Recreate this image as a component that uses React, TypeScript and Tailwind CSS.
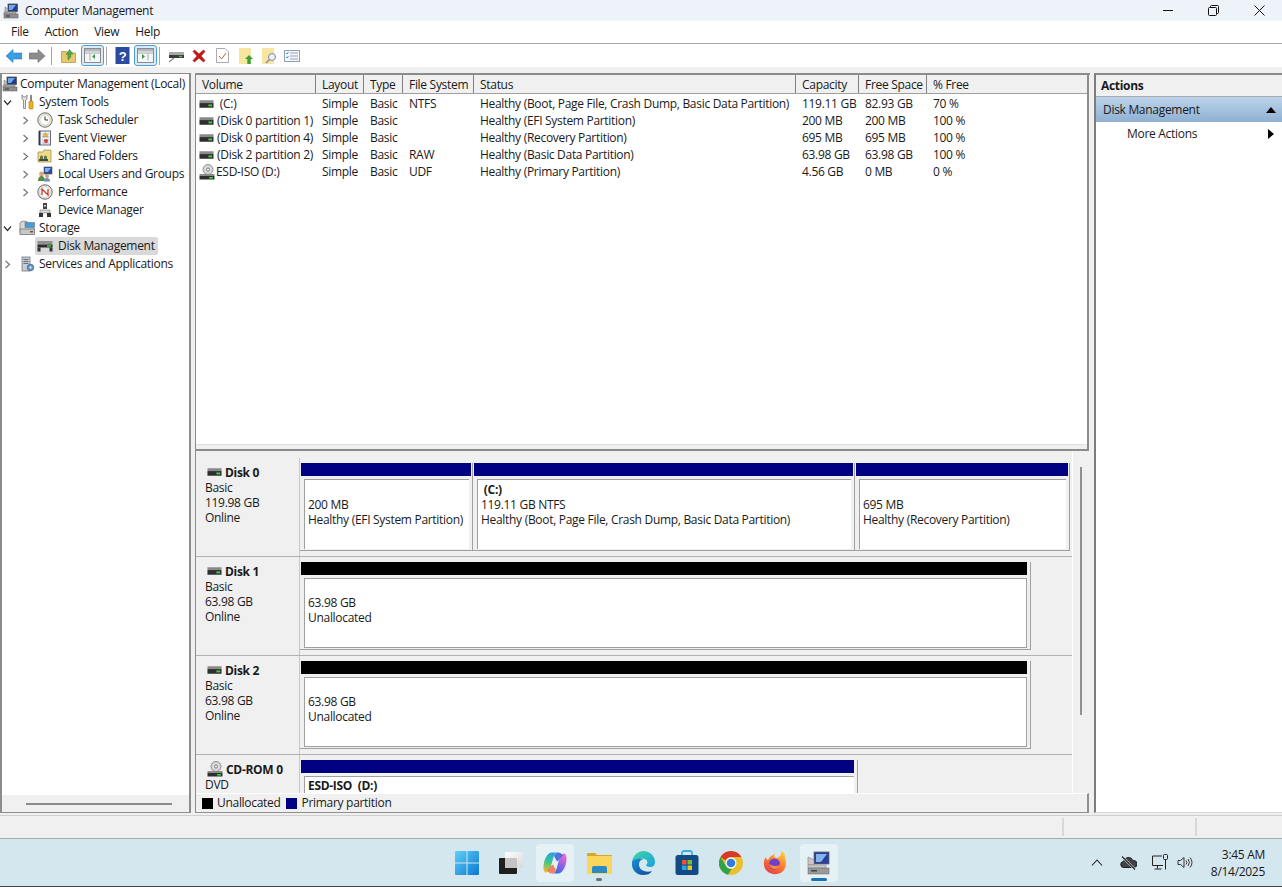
import React from "react";

const F = "[font-family:'Open_Sans','Noto_Sans',sans-serif]";

function DiskIcon({ className = "" }: { className?: string }) {
  return (
    <svg width="15" height="10" viewBox="0 0 16 10" className={`shrink-0 ${className}`}>
      <rect x="0.5" y="1" width="15" height="3" fill="#8a8a8a" />
      <rect x="0.5" y="4" width="15" height="5" fill="#2e2e2e" />
      <rect x="10" y="5.500" width="4" height="2" fill="#3fd03f" />
    </svg>
  );
}

function CdIcon() {
  return (
    <svg width="16" height="16" viewBox="0 0 16 16" className="shrink-0">
      <circle cx="9" cy="5.5" r="5" fill="#d8d8d8" stroke="#8c8c8c" />
      <circle cx="9" cy="5.5" r="1.5" fill="#fff" stroke="#777" />
      <rect x="0.5" y="10" width="15" height="2" fill="#8a8a8a" />
      <rect x="0.5" y="12" width="15" height="3.5" fill="#2e2e2e" />
      <rect x="10" y="13" width="4" height="1.5" fill="#3fd03f" />
    </svg>
  );
}

function CompMgmtIcon({ size = 16 }: { size?: number }) {
  return (
    <svg width={size} height={size} viewBox="0 0 16 16" className="shrink-0">
      <rect x="5" y="1" width="9.5" height="7.5" fill="#203a90" stroke="#555" strokeWidth="0.8" />
      <path d="M6 2h7l-4 5H6z" fill="#6fa8e8" />
      <rect x="1" y="9" width="12" height="2" fill="#b8b8b8" stroke="#777" strokeWidth="0.5" />
      <rect x="1" y="11" width="14" height="4" fill="#8f8f8f" stroke="#555" strokeWidth="0.5" />
      <rect x="3" y="12.5" width="4" height="1" fill="#333" />
      <path d="M2 4l3 2v3H2z" fill="#c0c0c0" stroke="#666" strokeWidth="0.5" />
    </svg>
  );
}

function Chevron({ open }: { open?: boolean }) {
  return (
    <svg width="9" height="9" viewBox="0 0 9 9" fill="none" strokeWidth="1.2">
      {open ? <path d="M1 2.5l3.5 4 3.5-4" stroke="#333" /> : <path d="M2.5 1l4 3.5-4 3.5" stroke="#777" />}
    </svg>
  );
}

function TreeIcon({ kind }: { kind: string }) {
  const common = { width: 16, height: 16, viewBox: "0 0 16 16" };
  switch (kind) {
    case "tools":
      return (
        <svg {...common}>
          <path d="M3 1v4l1.5 1v8.5h2V6L8 5V1L6.5 3h-2z" fill="#e8e8e8" stroke="#777" strokeWidth="0.8" />
          <path d="M11 1h2v6h-2z" fill="#888" />
          <rect x="10" y="7" width="4" height="8" rx="1" fill="#eeb020" stroke="#a87810" strokeWidth="0.6" />
        </svg>
      );
    case "clock":
      return (
        <svg {...common}>
          <circle cx="8" cy="8" r="7.2" fill="#e9e6d6" stroke="#707070" />
          <circle cx="8" cy="8" r="5" fill="#fff" stroke="#b8b8b8" strokeWidth="0.5" />
          <path d="M8 4.5V8h3" stroke="#333" fill="none" />
        </svg>
      );
    case "event":
      return (
        <svg {...common}>
          <rect x="2.5" y="1" width="11" height="14" fill="#f0f2f8" stroke="#556" strokeWidth="0.9" />
          <path d="M2.5 1v14" stroke="#335" strokeWidth="2" />
          <path d="M5 4h7M5 7h7M5 10h7M5 13h7" stroke="#99a" strokeWidth="0.7" />
          <path d="M8.5 2.5l2.5 4h-5z" fill="#f0c020" stroke="#a07a10" strokeWidth="0.4" />
          <circle cx="9" cy="11" r="2" fill="#d04030" />
        </svg>
      );
    case "shared":
      return (
        <svg {...common}>
          <path d="M1 4h5l1-2h7v12H1z" fill="#eed98a" stroke="#a89350" strokeWidth="0.8" />
          <path d="M3 9a1.5 1.5 0 113 0v2H3zM7 9a1.5 1.5 0 113 0v2H7z" fill="#5a7a40" />
          <rect x="2" y="11" width="9" height="2" fill="#445" />
        </svg>
      );
    case "users":
      return (
        <svg {...common}>
          <rect x="7" y="1" width="8" height="7" fill="#2a4a9a" stroke="#555" strokeWidth="0.6" />
          <path d="M8 2h6l-3 4H8z" fill="#80b0e8" />
          <circle cx="4.5" cy="8" r="2.4" fill="#d9a878" />
          <path d="M1 15c0-3.5 1.5-5 3.5-5S8 11.500 8 15z" fill="#5a8a40" />
          <circle cx="10" cy="10" r="2" fill="#c8a080" />
          <path d="M7 15.500c0-2.500 1.400-3.500 3-3.500s3 1 3 3.500z" fill="#6a8fc0" />
        </svg>
      );
    case "perf":
      return (
        <svg {...common}>
          <circle cx="8" cy="8" r="7.200" fill="#f2efe6" stroke="#666" />
          <circle cx="8" cy="8" r="5.300" fill="#fff" stroke="#aaa" strokeWidth="0.5" />
          <path d="M5 11V5l6 6V5" fill="none" stroke="#c03828" strokeWidth="1.300" />
        </svg>
      );
    case "device":
      return (
        <svg {...common}>
          <rect x="6" y="1" width="4" height="6" fill="#444" />
          <rect x="7" y="3" width="2" height="1.500" fill="#ddd" />
          <path d="M3 8h10v3H3z" fill="#d8d8d8" stroke="#777" strokeWidth="0.6" />
          <rect x="2" y="11" width="4" height="4" fill="#333" />
          <rect x="10" y="11" width="4" height="4" fill="#333" />
        </svg>
      );
    case "storage":
      return (
        <svg {...common}>
          <ellipse cx="5" cy="3.500" rx="4" ry="2.500" fill="#cfd8d8" stroke="#777" strokeWidth="0.7" />
          <path d="M1 3.500v9h14v-6H9v-3" fill="#d8d8d8" stroke="#777" strokeWidth="0.7" />
          <rect x="6" y="2.500" width="9.500" height="5" fill="#3fa0d8" stroke="#667" strokeWidth="0.5" />
          <rect x="1" y="9" width="14.500" height="5.500" fill="#c8c8c8" stroke="#666" strokeWidth="0.7" />
          <rect x="11" y="11" width="3" height="1.500" fill="#555" />
        </svg>
      );
    case "disk":
      return (
        <svg {...common}>
          <rect x="0.500" y="3" width="15" height="3.500" fill="#909090" />
          <rect x="0.500" y="6.500" width="15" height="3" fill="#2c2c2c" />
          <rect x="0.500" y="9.500" width="3" height="4" fill="#333" />
          <rect x="12.500" y="9.500" width="3" height="4" fill="#333" />
          <rect x="10" y="7.200" width="4" height="1.500" fill="#3fd03f" />
        </svg>
      );
    default:
      return (
        <svg {...common}>
          <rect x="3" y="1" width="8" height="14" fill="#c4ccd4" stroke="#667" strokeWidth="0.7" />
          <path d="M4.500 3.500h5M4.500 5.500h5M4.500 7.500h5" stroke="#445" strokeWidth="0.7" />
          <circle cx="11.500" cy="11.500" r="3.200" fill="#6a9ac8" stroke="#38608a" strokeWidth="0.8" />
          <circle cx="11.500" cy="11.500" r="1" fill="#fff" />
        </svg>
      );
  }
}

const tree = [
  { indent: 0, chevron: null, icon: "root", label: "Computer Management (Local)" },
  { indent: 0, chevron: "open", icon: "tools", label: "System Tools" },
  { indent: 18, chevron: "closed", icon: "clock", label: "Task Scheduler" },
  { indent: 18, chevron: "closed", icon: "event", label: "Event Viewer" },
  { indent: 18, chevron: "closed", icon: "shared", label: "Shared Folders" },
  { indent: 18, chevron: "closed", icon: "users", label: "Local Users and Groups" },
  { indent: 18, chevron: "closed", icon: "perf", label: "Performance" },
  { indent: 18, chevron: "none", icon: "device", label: "Device Manager" },
  { indent: 0, chevron: "open", icon: "storage", label: "Storage" },
  { indent: 18, chevron: "none", icon: "disk", label: "Disk Management", selected: true },
  { indent: 0, chevron: "closed", icon: "services", label: "Services and Applications" },
];

const cols = ["Volume", "Layout", "Type", "File System", "Status", "Capacity", "Free Space", "% Free"];
const rows = [
  ["\u00a0(C:)", "Simple", "Basic", "NTFS", "Healthy (Boot, Page File, Crash Dump, Basic Data Partition)", "119.11 GB", "82.93 GB", "70 %"],
  ["(Disk 0 partition 1)", "Simple", "Basic", "", "Healthy (EFI System Partition)", "200 MB", "200 MB", "100 %"],
  ["(Disk 0 partition 4)", "Simple", "Basic", "", "Healthy (Recovery Partition)", "695 MB", "695 MB", "100 %"],
  ["(Disk 2 partition 2)", "Simple", "Basic", "RAW", "Healthy (Basic Data Partition)", "63.98 GB", "63.98 GB", "100 %"],
  ["ESD-ISO (D:)", "Simple", "Basic", "UDF", "Healthy (Primary Partition)", "4.56 GB", "0 MB", "0 %"],
];
const gridCols = "grid-cols-[120px_48px_39px_71px_322px_63px_68px_161px]";

function ToolBtnPane({ play }: { play?: boolean }) {
  return (
    <div className="w-[23px] h-[21px] rounded-[3px] border border-[#4a9fd8] bg-[#dcebf8] flex items-center justify-center">
      <svg width="17" height="15" viewBox="0 0 17 15">
        <rect x="0.500" y="0.500" width="16" height="14" fill="#f4f6f8" stroke="#8a8a8a" />
        <rect x="1" y="1" width="15" height="2.500" fill="#b0b8c0" />
        {play ? (
          <>
            <path d="M5 6l3 2.500-3 2.500z" fill="#3a9a3a" />
            <path d="M11 5.500v7M1 5h15" stroke="#999" strokeWidth="0.8" />
          </>
        ) : (
          <>
            <path d="M11 6l-3 2.500 3 2.500z" fill="#3a9a3a" />
            <path d="M6 5.500v7M1 5h15" stroke="#999" strokeWidth="0.8" />
          </>
        )}
      </svg>
    </div>
  );
}

function Sep() {
  return <div className="w-px h-[18px] bg-[#a8a8a8]" />;
}

function Toolbar() {
  return (
    <div className="h-[23px] bg-white flex items-center pl-[6px]">
      <svg width="16" height="14" viewBox="0 0 16 14"><path d="M0 7l7-6.500V4h9v6H7v3.500z" fill="#3a9ee4" stroke="#2878b8" strokeWidth="0.6" /></svg>
      <svg width="16" height="14" viewBox="0 0 16 14" className="ml-[7px]"><path d="M16 7L9 .5V4H0v6h9v3.500z" fill="#8c8c8c" stroke="#6c6c6c" strokeWidth="0.6" /></svg>
      <div className="ml-[6px]"><Sep /></div>
      <svg width="15" height="15" viewBox="0 0 15 15" className="ml-[9px]">
        <path d="M0.500 3.500h5l1 1.500h8v9.500H.500z" fill="#e8c868" stroke="#a89040" strokeWidth="0.7" />
        <path d="M7 12V6L5 6.500 8.500 1.500 12 6l-2.300-.2V9z" fill="#4ca84c" stroke="#2e7a2e" strokeWidth="0.5" />
      </svg>
      <div className="ml-[5px]"><ToolBtnPane /></div>
      <div className="ml-[2px]"><Sep /></div>
      <svg width="15" height="17" viewBox="0 0 15 17" className="ml-[8px]">
        <rect width="14" height="17" x="0.500" fill="#2c4aa0" />
        <text x="7.500" y="14" fontSize="13" fontWeight="700" fill="#fff" textAnchor="middle" fontFamily="Liberation Sans">?</text>
      </svg>
      <div className="ml-[4px]"><ToolBtnPane play /></div>
      <div className="ml-[2px]"><Sep /></div>
      <svg width="16" height="14" viewBox="0 0 16 14" className="ml-[8px]">
        <rect x="1" y="3" width="15" height="3" fill="#a8a8a8" />
        <rect x="1" y="6" width="15" height="3" fill="#3c3c3c" />
        <rect x="11" y="6.800" width="3" height="1.400" fill="#3fd03f" />
        <path d="M6 9l-5 4" stroke="#8c8c8c" strokeWidth="1.500" />
      </svg>
      <svg width="14" height="14" viewBox="0 0 14 14" className="ml-[8px]"><path d="M1 2.500L2.500 1 7 5 11.500 1 13 2.500 9 7l4 4.500-1.500 1.500L7 9l-4.500 4L1 11.500 5 7z" fill="#c81818" stroke="#a01010" strokeWidth="0.6" /></svg>
      <svg width="13" height="15" viewBox="0 0 13 15" className="ml-[10px]">
        <path d="M.5.500h8.500l3.500 3.500v10.500H.500z" fill="#fff" stroke="#aaa" />
        <path d="M3 8l2.500 3L10 5" fill="none" stroke="#d0603a" strokeWidth="1" />
      </svg>
      <svg width="14" height="16" viewBox="0 0 14 16" className="ml-[10px]">
        <rect x="0" y="0" width="12" height="16" fill="#f7e6a0" />
        <path d="M10 7l4 4h-2.300v5H8.300v-5H6z" fill="#38a038" />
      </svg>
      <svg width="15" height="16" viewBox="0 0 15 16" className="ml-[9px]">
        <rect x="0" y="0" width="12" height="16" fill="#f7e6a0" />
        <circle cx="10" cy="9" r="3.500" fill="#e8f0f8" stroke="#889" />
        <path d="M7.500 11.500L4 15" stroke="#889" strokeWidth="1.500" />
      </svg>
      <svg width="16" height="12" viewBox="0 0 16 12" className="ml-[7px]">
        <rect x="0.500" y="0.500" width="15" height="11" fill="#f4f8fc" stroke="#8fa0b0" />
        <path d="M6 3h8M6 6h8M6 9h8" stroke="#88a" strokeWidth="0.8" />
        <path d="M2 3l1 1 1.500-2M2 7l1 1 1.500-2" stroke="#4070b0" fill="none" strokeWidth="0.8" />
      </svg>
    </div>
  );
}

function TreePane() {
  return (
    <div className="w-[191px] border border-[#8c8c8c] border-l-2 border-r-2 bg-white flex flex-col">
      <div className="flex-1 pt-px">
        {tree.map((t) => (
          <div key={t.label} className="h-[18px] flex items-center" style={{ paddingLeft: t.indent }}>
            {t.chevron === null ? null : (
              <div className="w-[10px] flex justify-center">
                {t.chevron === "none" ? null : <Chevron open={t.chevron === "open"} />}
              </div>
            )}
            <div className={`flex items-center h-[18px] pr-[3px] pl-[2px] ${t.chevron === null ? "" : "ml-[5px]"} ${t.selected ? "bg-[#d9d9d9] rounded-[2px]" : ""}`}>
              <div className={`w-[16px] h-[16px] flex items-center justify-center ${t.chevron === null ? "-ml-[2px] mr-[2px]" : t.indent === 0 ? "mr-[4px]" : "mr-[5px]"}`}>
                {t.icon === "root" ? <CompMgmtIcon /> : <TreeIcon kind={t.icon} />}
              </div>
              <span className="whitespace-nowrap">{t.label}</span>
            </div>
          </div>
        ))}
      </div>
      <div className="h-[17px] bg-[#f0f0f0] flex items-center pl-[24px]">
        <div className="w-[146px] h-[2px] bg-[#8c8c8c]" />
      </div>
    </div>
  );
}

function VolumeTable() {
  return (
    <div className="h-[376px] shrink-0 mr-px bg-white border-b-[2px] border-[#8c8c8c] border-r-2 overflow-hidden flex flex-col">
      <div className={`grid ${gridCols} h-[19px] shrink-0 bg-[#f0f0f0] border-b border-[#a0a0a0]`}>
        {cols.map((c) => (
          <div key={c} className="border-r border-[#808080] px-[6px] flex items-center leading-none whitespace-nowrap pt-px">{c}</div>
        ))}
      </div>
      <div className="flex-1 pt-px">
        {rows.map((r, i) => (
          <div key={r[0]} className={`grid ${gridCols} h-[17px] items-center`}>
            {r.map((v, j) => (
              <div key={j} className={`whitespace-nowrap ${j === 0 ? `pl-[3px] flex items-center ${i === 4 ? "gap-px" : "gap-[3px]"}` : "pl-[6px]"}`}>
                {j === 0 ? (i === 4 ? <CdIcon /> : <DiskIcon />) : null}
                {v}
              </div>
            ))}
          </div>
        ))}
      </div>
      <div className="h-[5px] shrink-0 bg-[#f0f0f0] border-t border-[#e0e0e0]" />
    </div>
  );
}

function Partition({ w, bar, title, l1, l2, short }: { w: number; bar: string; title?: string; l1?: string; l2?: string; short?: boolean }) {
  return (
    <div className="shrink-0 h-[88px] bg-[#f0f0f0] border-r border-b border-[#a0a0a0] pl-px flex flex-col" style={{ width: w }}>
      <div className={`h-[13px] shrink-0 ${short ? "mr-[3px]" : "mr-px"}`} style={{ background: bar }} />
      <div className={`mt-[3px] ml-[3px] h-[70px] border-l border-t border-[#a0a0a0] bg-white pl-[3px] leading-[15px] flex flex-col justify-end pb-[22px] whitespace-nowrap ${short ? "mr-[3px] border-r border-b" : "mr-[3px]"}`}>
        {title ? <div className="font-bold">{title}</div> : null}
        {l1 ? <div>{l1}</div> : null}
        {l2 ? <div>{l2}</div> : null}
      </div>
    </div>
  );
}

function DiskRow({ name, lines, cd, children }: { name: string; lines: string[]; cd?: boolean; children: React.ReactNode }) {
  return (
    <div className="h-[99px] shrink-0 flex border-b border-[#b0b0b0]">
      <div className="w-[104px] shrink-0 border-r border-[#c8c8c8] pl-[9px] pt-[6px] leading-[15px]">
        <div className="flex items-center h-[16px] gap-[3px] pl-[2px] font-bold whitespace-nowrap">
          {cd ? <CdIcon /> : <DiskIcon />}
          {name}
        </div>
        {lines.map((l) => <div key={l}>{l}</div>)}
      </div>
      <div className="pt-[5px] flex items-start">{children}</div>
    </div>
  );
}

function DiskPane() {
  return (
    <div className="relative flex-1 min-h-0 flex flex-col bg-[#f0f0f0]">
      <div className="h-[342px] w-[877px] pt-[7px] overflow-hidden flex flex-col border-r border-white">
        <DiskRow name="Disk 0" lines={["Basic", "119.98 GB", "Online"]}>
          <Partition w={173} bar="#000080" l1="200 MB" l2="Healthy (EFI System Partition)" />
          <Partition w={382} bar="#000080" title={"\u00a0(C:)"} l1="119.11 GB NTFS" l2="Healthy (Boot, Page File, Crash Dump, Basic Data Partition)" />
          <Partition w={215} bar="#000080" l1="695 MB" l2="Healthy (Recovery Partition)" />
        </DiskRow>
        <DiskRow name="Disk 1" lines={["Basic", "63.98 GB", "Online"]}>
          <Partition w={731} bar="#000" l1="63.98 GB" l2="Unallocated" short />
        </DiskRow>
        <DiskRow name="Disk 2" lines={["Basic", "63.98 GB", "Online"]}>
          <Partition w={731} bar="#000" l1="63.98 GB" l2="Unallocated" short />
        </DiskRow>
        <DiskRow name="CD-ROM 0" cd lines={["DVD"]}>
          <div className="w-[558px] h-[88px] shrink-0 border-r border-[#a0a0a0] pl-px">
            <div className="h-[13px] mr-[3px] bg-[#000080]" />
            <div className="mt-[3px] ml-[3px] mr-[3px] h-[70px] border-l border-t border-[#a0a0a0] bg-white pl-[3px] pt-[2px] font-bold leading-[14px]">ESD-ISO&nbsp;&nbsp;(D:)</div>
          </div>
        </DiskRow>
      </div>
      <div className="h-[20px] mr-px flex items-center border-t border-t-white border-b border-r-2 border-r-[#909090] border-b-[#909090] pl-[6px] leading-none">
        <div className="w-[11px] h-[11px] bg-black mr-[4px]" />
        <span>Unallocated</span>
        <div className="w-[11px] h-[11px] bg-[#000080] ml-[5px] mr-[5px]" />
        <span>Primary partition</span>
      </div>
      <div className="absolute left-[884px] top-[16px] w-[2px] h-[248px] bg-[#909090]" />
    </div>
  );
}

function ActionsPane() {
  return (
    <div className="flex-1 border-l-2 border-t-2 border-b border-b-[#d8d8d8] border-l-[#7c7c7c] border-t-[#8c8c8c] bg-white flex flex-col">
      <div className="h-[22px] bg-[#f0f0f0] border-b border-[#a8a8a8] pl-[5px] flex items-center font-bold">Actions</div>
      <div className="h-[25px] bg-gradient-to-b from-[#bcd4ea] to-[#8fb0d2] pl-[7px] pr-[6px] flex items-center justify-between">
        <span>Disk Management</span>
        <svg width="10" height="6" viewBox="0 0 10 6"><path d="M5 0l5 6H0z" fill="#000" /></svg>
      </div>
      <div className="h-[24px] pl-[31px] pr-[8px] flex items-center justify-between">
        <span>More Actions</span>
        <svg width="6" height="10" viewBox="0 0 6 10"><path d="M0 0l6 5-6 5z" fill="#000" /></svg>
      </div>
    </div>
  );
}

function TaskIcon({ children, active, dot, bar }: { children: React.ReactNode; active?: boolean; dot?: boolean; bar?: boolean }) {
  return (
    <div className={`relative w-[38px] h-[38px] mx-[3px] rounded-[4px] flex items-center justify-center ${active ? "bg-[#e6f1f6]" : ""}`}>
      {children}
      {dot ? <div className="absolute bottom-[1px] left-1/2 -translate-x-1/2 w-[6px] h-[3px] rounded-full bg-[#707070]" /> : null}
      {bar ? <div className="absolute bottom-[1px] left-1/2 -translate-x-1/2 w-[16px] h-[3px] rounded-full bg-[#1a70b8]" /> : null}
    </div>
  );
}

function Taskbar() {
  return (
    <div className="h-[49px] bg-[#d4e6ee] border-t border-[#a2aab0] border-b border-b-[#444] flex items-center text-[#1a1a1a]">
      <div className="w-[445px] shrink-0" />
      <div className="flex items-center">
        <TaskIcon>
          <svg width="24" height="24" viewBox="0 0 24 24">
            <defs><linearGradient id="w" x1="0" y1="0" x2="1" y2="1"><stop offset="0" stopColor="#5fd0f8" /><stop offset="1" stopColor="#0a78d0" /></linearGradient></defs>
            <path d="M0 1a1 1 0 011-1h10.500v11.500H0zM12.500 0H23a1 1 0 011 1v10.500H12.500zM0 12.500h11.500V24H1a1 1 0 01-1-1zM12.500 12.500H24V23a1 1 0 01-1 1H12.500z" fill="url(#w)" />
          </svg>
        </TaskIcon>
        <TaskIcon>
          <svg width="24" height="22" viewBox="0 0 24 22">
            <defs><linearGradient id="tv" x1="0" y1="0" x2="1" y2="1"><stop offset="0" stopColor="#ffffff" /><stop offset="1" stopColor="#d8d8d8" /></linearGradient></defs>
            <rect x="6" y="0" width="18" height="16" rx="1" fill="url(#tv)" />
            <rect x="0" y="6" width="18" height="16" rx="1" fill="#1f1f1f" />
            <path d="M6 6h12v10H6z" fill="#c4c4c4" />
          </svg>
        </TaskIcon>
        <TaskIcon active>
          <svg width="24" height="24" viewBox="0 0 24 24">
            <defs>
              <linearGradient id="c1" x1="0.500" y1="0" x2="0.300" y2="1"><stop offset="0" stopColor="#2a9ce8" /><stop offset="0.500" stopColor="#3fc88a" /><stop offset="1" stopColor="#f8b830" /></linearGradient>
              <linearGradient id="c2" x1="0.800" y1="0" x2="0.300" y2="1"><stop offset="0" stopColor="#f070c8" /><stop offset="0.500" stopColor="#9a60e8" /><stop offset="1" stopColor="#2a70e0" /></linearGradient>
            </defs>
            <path d="M9 1.500h6c-2 0-3.500 1-4.200 3.500L8 15c-1 3.500-2.500 6.500-5.500 6.500C1 21.500.2 18.500.5 15 1 9 4 1.500 9 1.500z" fill="url(#c1)" />
            <path d="M15 22.500H9c2 0 3.500-1 4.200-3.500L16 9c1-3.500 2.500-6.500 5.500-6.500 1.500 0 2.300 3 2 6.500-.5 6-3.500 13.500-8.500 13.500z" fill="url(#c2)" />
            <path d="M9 22.500c-2.500 0-4-1.500-5-3.500 2-.5 3-2 4-4l2-1.500 3 5.500c-.6 2-2 3.500-4 3.500z" fill="#f07048" opacity="0.850" />
            <path d="M15 1.500c2.500 0 4 1.500 5 3.500-2 .5-3 2-4 4l-2 1.500-3-5.500c.6-2 2-3.500 4-3.500z" fill="#3060d8" opacity="0.850" />
          </svg>
        </TaskIcon>
        <TaskIcon dot>
          <svg width="25" height="22" viewBox="0 0 25 22">
            <path d="M0 2a1 1 0 011-1h7l2 2h14a1 1 0 011 1v2H0z" fill="#d8a820" />
            <rect x="0" y="4" width="25" height="18" rx="1" fill="#fbd65c" />
            <path d="M5 21v-5a2 2 0 012-2h11a2 2 0 012 2v5z" fill="#2a8ac8" />
          </svg>
        </TaskIcon>
        <TaskIcon>
          <svg width="24" height="24" viewBox="0 0 24 24">
            <defs>
              <linearGradient id="e1" x1="0" y1="0" x2="1" y2="1"><stop offset="0" stopColor="#40d8a0" /><stop offset="1" stopColor="#1aa0e0" /></linearGradient>
              <linearGradient id="e2" x1="0" y1="0" x2="1" y2="1"><stop offset="0" stopColor="#1a90d8" /><stop offset="1" stopColor="#0c4a98" /></linearGradient>
            </defs>
            <path d="M1 11C2 4 7 0 12.500 0 19 0 24 5 24 11c0 3-2 5-5 5-2 0-4-1-4-2 1-1 2-2 1-4-1-2-4-3-7-2-4 1-7 3-8 3z" fill="url(#e1)" />
            <path d="M1 11c-1 7 4 13 11 13 4 0 7-1 9-4-3 1-7 1-10-1-3-2-4-6-2-9 1-1 2-2 4-2C8 7 2 8 1 11z" fill="url(#e2)" />
          </svg>
        </TaskIcon>
        <TaskIcon>
          <svg width="24" height="25" viewBox="0 0 24 25">
            <path d="M7 6V3a2 2 0 012-2h6a2 2 0 012 2v3" fill="none" stroke="#3ab0e0" strokeWidth="1.800" />
            <rect x="0.500" y="5" width="23" height="20" rx="2.500" fill="#124a84" />
            <rect x="7" y="10" width="4.500" height="4.500" fill="#f05030" />
            <rect x="12.500" y="10" width="4.500" height="4.500" fill="#70c030" />
            <rect x="7" y="15.500" width="4.500" height="4.500" fill="#20a8e8" />
            <rect x="12.500" y="15.500" width="4.500" height="4.500" fill="#f8c020" />
          </svg>
        </TaskIcon>
        <TaskIcon>
          <svg width="24" height="24" viewBox="0 0 24 24">
            <circle cx="12" cy="12" r="12" fill="#e8c030" />
            <path d="M12 0a12 12 0 0110.400 6H12a6 6 0 00-5.500 3.500L1.600 6A12 12 0 0112 0z" fill="#d8392c" />
            <path d="M1.600 6l5 8.500a6 6 0 006 3.500L9 23.800A12 12 0 011.600 6z" fill="#2fa24a" />
            <circle cx="12" cy="12" r="5.500" fill="#fff" />
            <circle cx="12" cy="12" r="4.300" fill="#2f7de0" />
          </svg>
        </TaskIcon>
        <TaskIcon>
          <svg width="24" height="24" viewBox="0 0 24 24">
            <defs><linearGradient id="f1" x1="0.800" y1="0" x2="0.200" y2="1"><stop offset="0" stopColor="#ffd030" /><stop offset="0.500" stopColor="#fb7a30" /><stop offset="1" stopColor="#e8384a" /></linearGradient></defs>
            <path d="M22 6c2 6 1 12-3 15-4 3-11 3-15-1C0 16 0 10 3 6c0 2 1 3 2 3 1-3 4-5 7-6-1 2-1 3 1 4 3 0 6-3 5-7 3 1 4 3 4 6z" fill="url(#f1)" />
            <circle cx="11.500" cy="13" r="5.500" fill="#7040c8" />
            <path d="M6 13c1 3 3 5 6 5 3 0 5-2 5-5-1 2-3 2-5 2s-4-1-6-2z" fill="#fb8a30" />
          </svg>
        </TaskIcon>
        <TaskIcon active bar>
          <svg width="24" height="24" viewBox="0 0 24 24">
            <rect x="7" y="1" width="15" height="12" fill="#2a3f98" stroke="#667" strokeWidth="0.8" />
            <path d="M9 3h11l-6 8H9z" fill="#80b4ea" />
            <path d="M1 6l6 3v5H1z" fill="#c8c8c8" stroke="#777" strokeWidth="0.6" />
            <rect x="1" y="14" width="18" height="3" fill="#c8c8c8" stroke="#888" strokeWidth="0.5" />
            <rect x="1" y="17" width="21" height="6" fill="#999" stroke="#666" strokeWidth="0.5" />
            <rect x="4" y="19" width="6" height="1.500" fill="#444" />
          </svg>
        </TaskIcon>
      </div>
      <div className="flex-1" />
      <div className="flex items-center pr-[17px]">
        <svg width="12" height="7" viewBox="0 0 12 7" fill="none" stroke="#222" strokeWidth="1.100"><path d="M1 6.500L6 1l5 5.500" /></svg>
        <svg width="17" height="14" viewBox="0 0 17 14" className="ml-[17px]">
          <path d="M4 11.500a3 3 0 01-.5-6A5 5 0 0113 4.500a3.500 3.500 0 011 7z" fill="#444" stroke="#222" />
          <path d="M2.500 1l12 12" stroke="#d4e6ee" strokeWidth="2.400" />
          <path d="M2 0.500l13 13" stroke="#222" strokeWidth="1.100" />
        </svg>
        <svg width="18" height="17" viewBox="0 0 18 17" fill="none" stroke="#222" strokeWidth="1" className="ml-[15px]">
          <path d="M11 11.500H.5V2H10M5.500 11.500v3M2.500 15h7" />
          <rect x="11.500" y="0.500" width="4" height="5" rx="1" />
          <path d="M13.500 5.500V15.500" />
        </svg>
        <svg width="17" height="13" viewBox="0 0 17 13" fill="none" stroke="#222" strokeWidth="0.900" className="ml-[7px]">
          <path d="M1 4.500h2.500L7 1.500v10L3.500 8.500H1z" />
          <path d="M9 4.500a3 3 0 010 4M11 3a5.500 5.500 0 010 7M13 1.500a8 8 0 010 10" />
        </svg>
        <div className="ml-[15px] w-[56px] text-right leading-[17px] text-[12px]">
          <div>3:45 AM</div>
          <div>8/14/2025</div>
        </div>
      </div>
    </div>
  );
}

export default function App() {
  return (
    <div className={`w-[1282px] h-[887px] flex flex-col overflow-hidden bg-[#f0f0f0] text-[12px] leading-[16px] tracking-[-0.3px] text-[#1a1a1a] ${F}`}>
      <div className="h-[21px] bg-[#eef2f9] flex items-center pl-[3px]">
        <CompMgmtIcon />
        <span className="ml-[6px]">Computer Management</span>
        <div className="flex-1" />
        <svg width="10" height="2" viewBox="0 0 10 2"><rect width="10" height="1" fill="#111" /></svg>
        <svg width="11" height="11" viewBox="0 0 11 11" fill="none" stroke="#111" className="ml-[35px]"><rect x=".5" y="2.500" width="8" height="8" rx="1" /><path d="M2.500 2.500V1.500a1 1 0 011-1h6a1 1 0 011 1v6a1 1 0 01-1 1h-1" /></svg>
        <svg width="11" height="11" viewBox="0 0 11 11" fill="none" stroke="#111" className="ml-[35px] mr-[17px]"><path d="M.5.500l10 10M10.500.500l-10 10" /></svg>
      </div>
      <div className="h-[23px] bg-white border-b border-[#a8a8a8] flex items-center pl-[2px]">
        {["File", "Action", "View", "Help"].map((m, i) => (
          <span key={m} className={["ml-[9px]", "ml-[16px]", "ml-[16px]", "ml-[16px]"][i]}>{m}</span>
        ))}
      </div>
      <Toolbar />
      <div className="h-[6px]" />
      <div className="flex-1 min-h-0 flex">
        <TreePane />
        <div className="w-[4px]" />
        <div className="w-[895px] flex flex-col border-l border-t-2 border-[#8c8c8c]">
          <VolumeTable />
          <DiskPane />
        </div>
        <div className="w-[4px]" />
        <ActionsPane />
      </div>
      <div className="h-[25px] shrink-0 pt-[2px]">
        <div className="h-full border-t border-[#d0d0d0] flex">
          <div className="w-[1064px] my-[2px] border-r-2 border-[#d8d8d8]" />
          <div className="w-[133px] my-[2px] border-r-2 border-[#d8d8d8]" />
        </div>
      </div>
      <Taskbar />
    </div>
  );
}
